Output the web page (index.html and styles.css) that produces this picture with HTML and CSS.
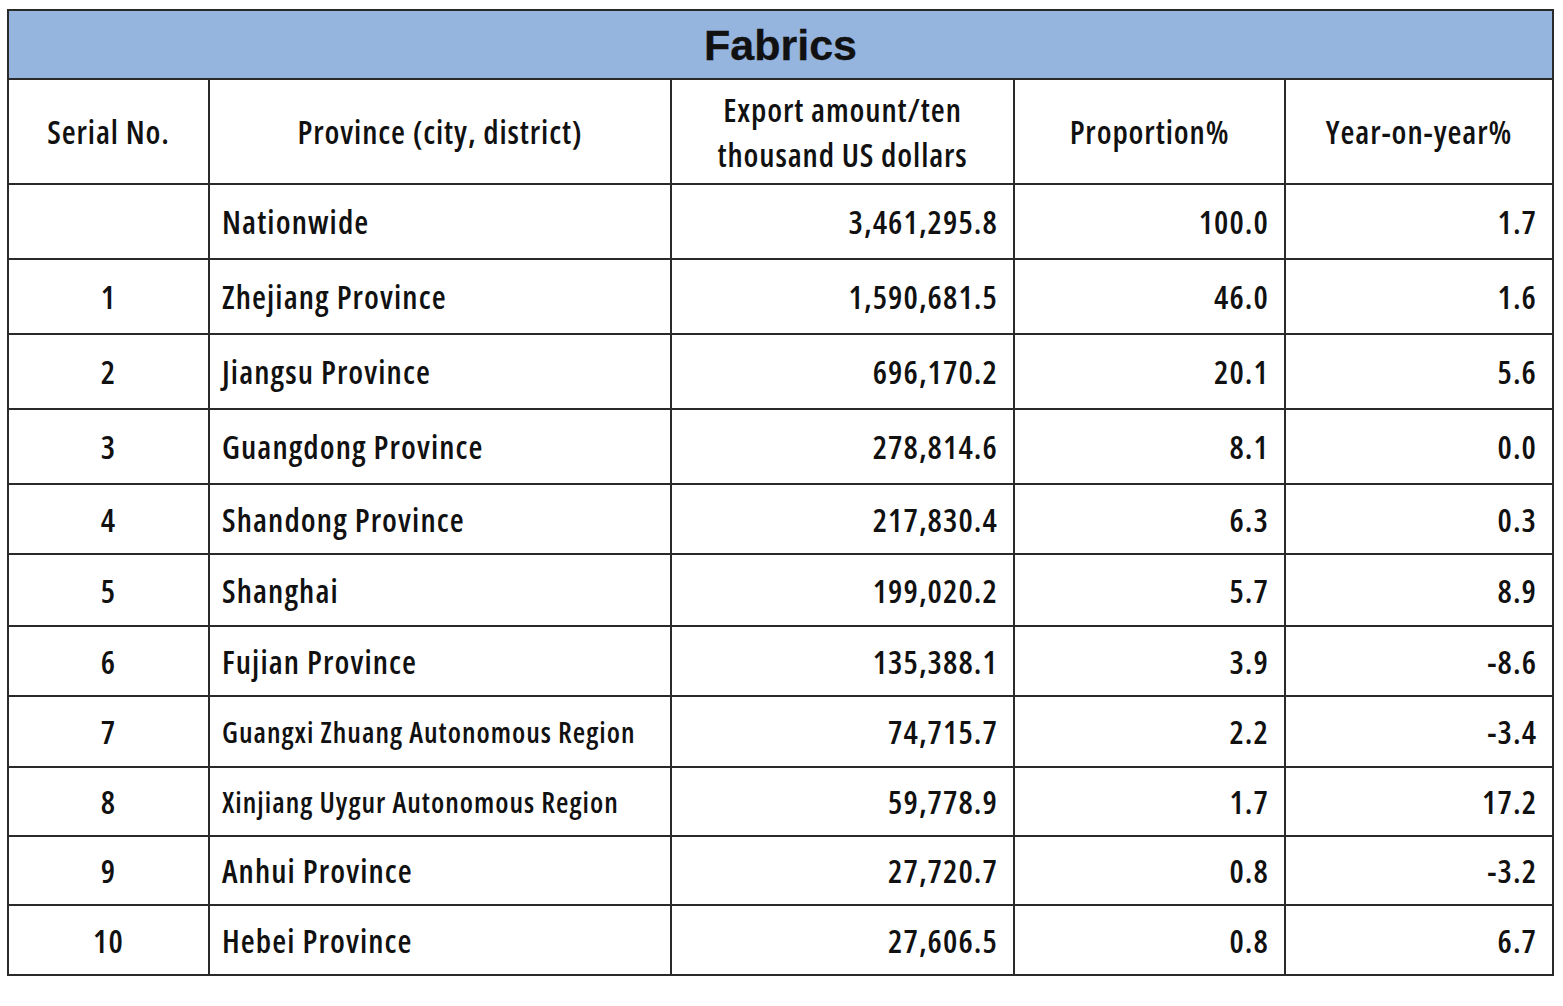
FILE: index.html
```html
<!DOCTYPE html>
<html lang="en">
<head>
<meta charset="utf-8">
<title>Fabrics</title>
<link rel="stylesheet" href="styles.css">
</head>
<body>
<table class="sheet">
  <colgroup>
    <col class="c-no">
    <col class="c-prov">
    <col class="c-amt">
    <col class="c-prop">
    <col class="c-yoy">
  </colgroup>
  <thead>
    <tr class="title-row"><th colspan="5" class="title">Fabrics</th></tr>
    <tr class="head-row">
      <th>Serial No.</th>
      <th>Province (city, district)</th>
      <th class="wrap">Export amount/ten<br>thousand US dollars</th>
      <th>Proportion%</th>
      <th>Year-on-year%</th>
    </tr>
  </thead>
  <tbody>
    <tr class="r75"><td class="no"></td><td class="prov">Nationwide</td><td class="num">3,461,295.8</td><td class="num">100.0</td><td class="num">1.7</td></tr>
    <tr class="r75"><td class="no">1</td><td class="prov">Zhejiang Province</td><td class="num">1,590,681.5</td><td class="num">46.0</td><td class="num">1.6</td></tr>
    <tr class="r75"><td class="no">2</td><td class="prov">Jiangsu Province</td><td class="num">696,170.2</td><td class="num">20.1</td><td class="num">5.6</td></tr>
    <tr class="r75"><td class="no">3</td><td class="prov">Guangdong Province</td><td class="num">278,814.6</td><td class="num">8.1</td><td class="num">0.0</td></tr>
    <tr class="r70"><td class="no">4</td><td class="prov">Shandong Province</td><td class="num">217,830.4</td><td class="num">6.3</td><td class="num">0.3</td></tr>
    <tr class="r72"><td class="no">5</td><td class="prov">Shanghai</td><td class="num">199,020.2</td><td class="num">5.7</td><td class="num">8.9</td></tr>
    <tr class="r70"><td class="no">6</td><td class="prov">Fujian Province</td><td class="num">135,388.1</td><td class="num">3.9</td><td class="num">-8.6</td></tr>
    <tr class="r71"><td class="no">7</td><td class="prov small">Guangxi Zhuang Autonomous Region</td><td class="num">74,715.7</td><td class="num">2.2</td><td class="num">-3.4</td></tr>
    <tr class="r69"><td class="no">8</td><td class="prov small">Xinjiang Uygur Autonomous Region</td><td class="num">59,778.9</td><td class="num">1.7</td><td class="num">17.2</td></tr>
    <tr class="r69"><td class="no">9</td><td class="prov">Anhui Province</td><td class="num">27,720.7</td><td class="num">0.8</td><td class="num">-3.2</td></tr>
    <tr class="r70"><td class="no">10</td><td class="prov">Hebei Province</td><td class="num">27,606.5</td><td class="num">0.8</td><td class="num">6.7</td></tr>
  </tbody>
</table>
</body>
</html>
```
FILE: styles.css
```css
html, body {
  margin: 0;
  padding: 0;
  background: #ffffff;
}

body {
  padding: 9px 0 0 7px;
}

.sheet {
  border-collapse: collapse;
  table-layout: fixed;
  width: 1545px;
  font-family: "Open Sans", sans-serif;
  font-stretch: 86%;
  font-size: 32px;
  letter-spacing: 1.1px;
  color: #111111;
}

.c-no { width: 201px; }
.c-prov { width: 462px; }
.c-amt { width: 343px; }
.c-prop { width: 271px; }
.c-yoy { width: 268px; }

.sheet th,
.sheet td {
  border: 2px solid #2a2a2a;
  padding: 0;
  vertical-align: middle;
  white-space: nowrap;
  font-weight: 600;
}

.title-row { height: 69px; }

.sheet .title {
  background: #95b4de;
  font-family: "Liberation Sans", "Noto Sans", sans-serif;
  font-stretch: 100%;
  font-weight: 700;
  font-size: 43px;
  letter-spacing: 0;
  text-align: center;
  -webkit-text-stroke: 0.3px #111111;
  padding-top: 2px;
}

.head-row { height: 105px; }

.head-row th {
  text-align: center;
}

.sheet .head-row th {
  letter-spacing: 0.9px;
}

.head-row .wrap {
  line-height: 45px;
}

.r75 { height: 75px; }
.r72 { height: 72px; }
.r71 { height: 71px; }
.r70 { height: 70px; }
.r69 { height: 69px; }

.sheet .no {
  text-align: center;
}

.sheet .prov {
  text-align: left;
  padding-left: 12px;
}

.sheet .prov.small {
  font-size: 28.5px;
  letter-spacing: 1px;
}

.sheet .num {
  text-align: right;
  padding-right: 15px;
}
```
